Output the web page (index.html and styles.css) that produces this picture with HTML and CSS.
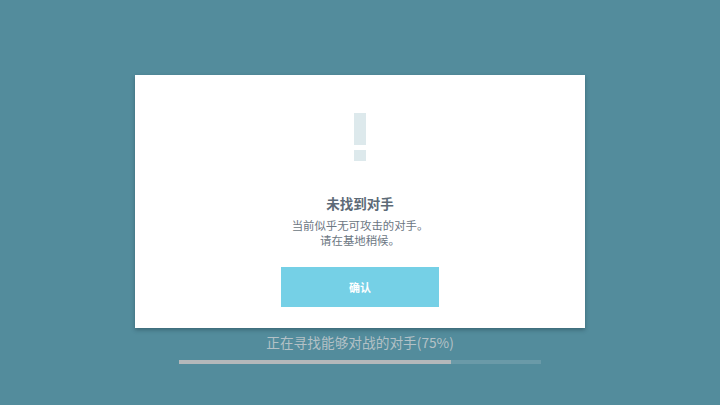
FILE: index.html
```html
<!DOCTYPE html>
<html lang="zh-CN">
  <head>
    <meta charset="UTF-8" />
    <meta name="viewport" content="width=device-width, initial-scale=1.0" />
    <title>对战匹配</title>
    <link rel="stylesheet" href="styles.css">
  </head>
  <body>
    <div class="stage">
      <div class="dialog">
        <div class="alert-mark">
          <span class="mark-bar"></span>
          <span class="mark-dot"></span>
        </div>
        <h2 class="dialog-title">未找到对手</h2>
        <p class="dialog-text">当前似乎无可攻击的对手。<br />请在基地稍候。</p>
        <button class="confirm">确认</button>
      </div>
      <div class="search-status">正在寻找能够对战的对手(75%)</div>
      <div class="progress">
        <div class="progress-fill" style="width: 75%"></div>
      </div>
    </div>
  </body>
</html>
```

FILE: styles.css
```css
html,
body {
  margin: 0;
  padding: 0;
  height: 100%;
  background: #538c9c;
  font-family: 'Noto Sans CJK SC', 'Noto Sans', sans-serif;
}
.stage {
  display: flex;
  flex-direction: column;
  align-items: center;
  padding-top: 75px;
}
.dialog {
  width: 450px;
  height: 253px;
  box-sizing: border-box;
  background: #fff;
  box-shadow: 0 2px 4px rgba(30, 60, 70, 0.45);
  display: flex;
  flex-direction: column;
  align-items: center;
  padding-top: 38px;
}
.alert-mark {
  display: flex;
  flex-direction: column;
  align-items: center;
  gap: 5px;
}
.mark-bar {
  width: 12px;
  height: 32px;
  background: #dde9ec;
}
.mark-dot {
  width: 12px;
  height: 11px;
  background: #dde9ec;
}
.dialog-title {
  margin: 33px 0 0 0;
  font-size: 13.5px;
  line-height: 18px;
  font-weight: 600;
  color: #5d6a77;
}
.dialog-text {
  margin: 6px 0 0 0;
  font-size: 11.4px;
  line-height: 15px;
  color: #6b7682;
  text-align: center;
}
.confirm {
  margin-top: 19px;
  width: 158px;
  height: 40px;
  border: 0;
  background: #75d0e6;
  color: #fff;
  font-family: inherit;
  font-size: 11px;
  font-weight: 700;
}
.search-status {
  margin-top: 5px;
  font-size: 13.7px;
  line-height: 18px;
  color: #b3c1c6;
}
.progress {
  margin-top: 9px;
  width: 362px;
  height: 4px;
  background: #6a9aa8;
}
.progress-fill {
  height: 100%;
  background: #b4b8ba;
}
```
